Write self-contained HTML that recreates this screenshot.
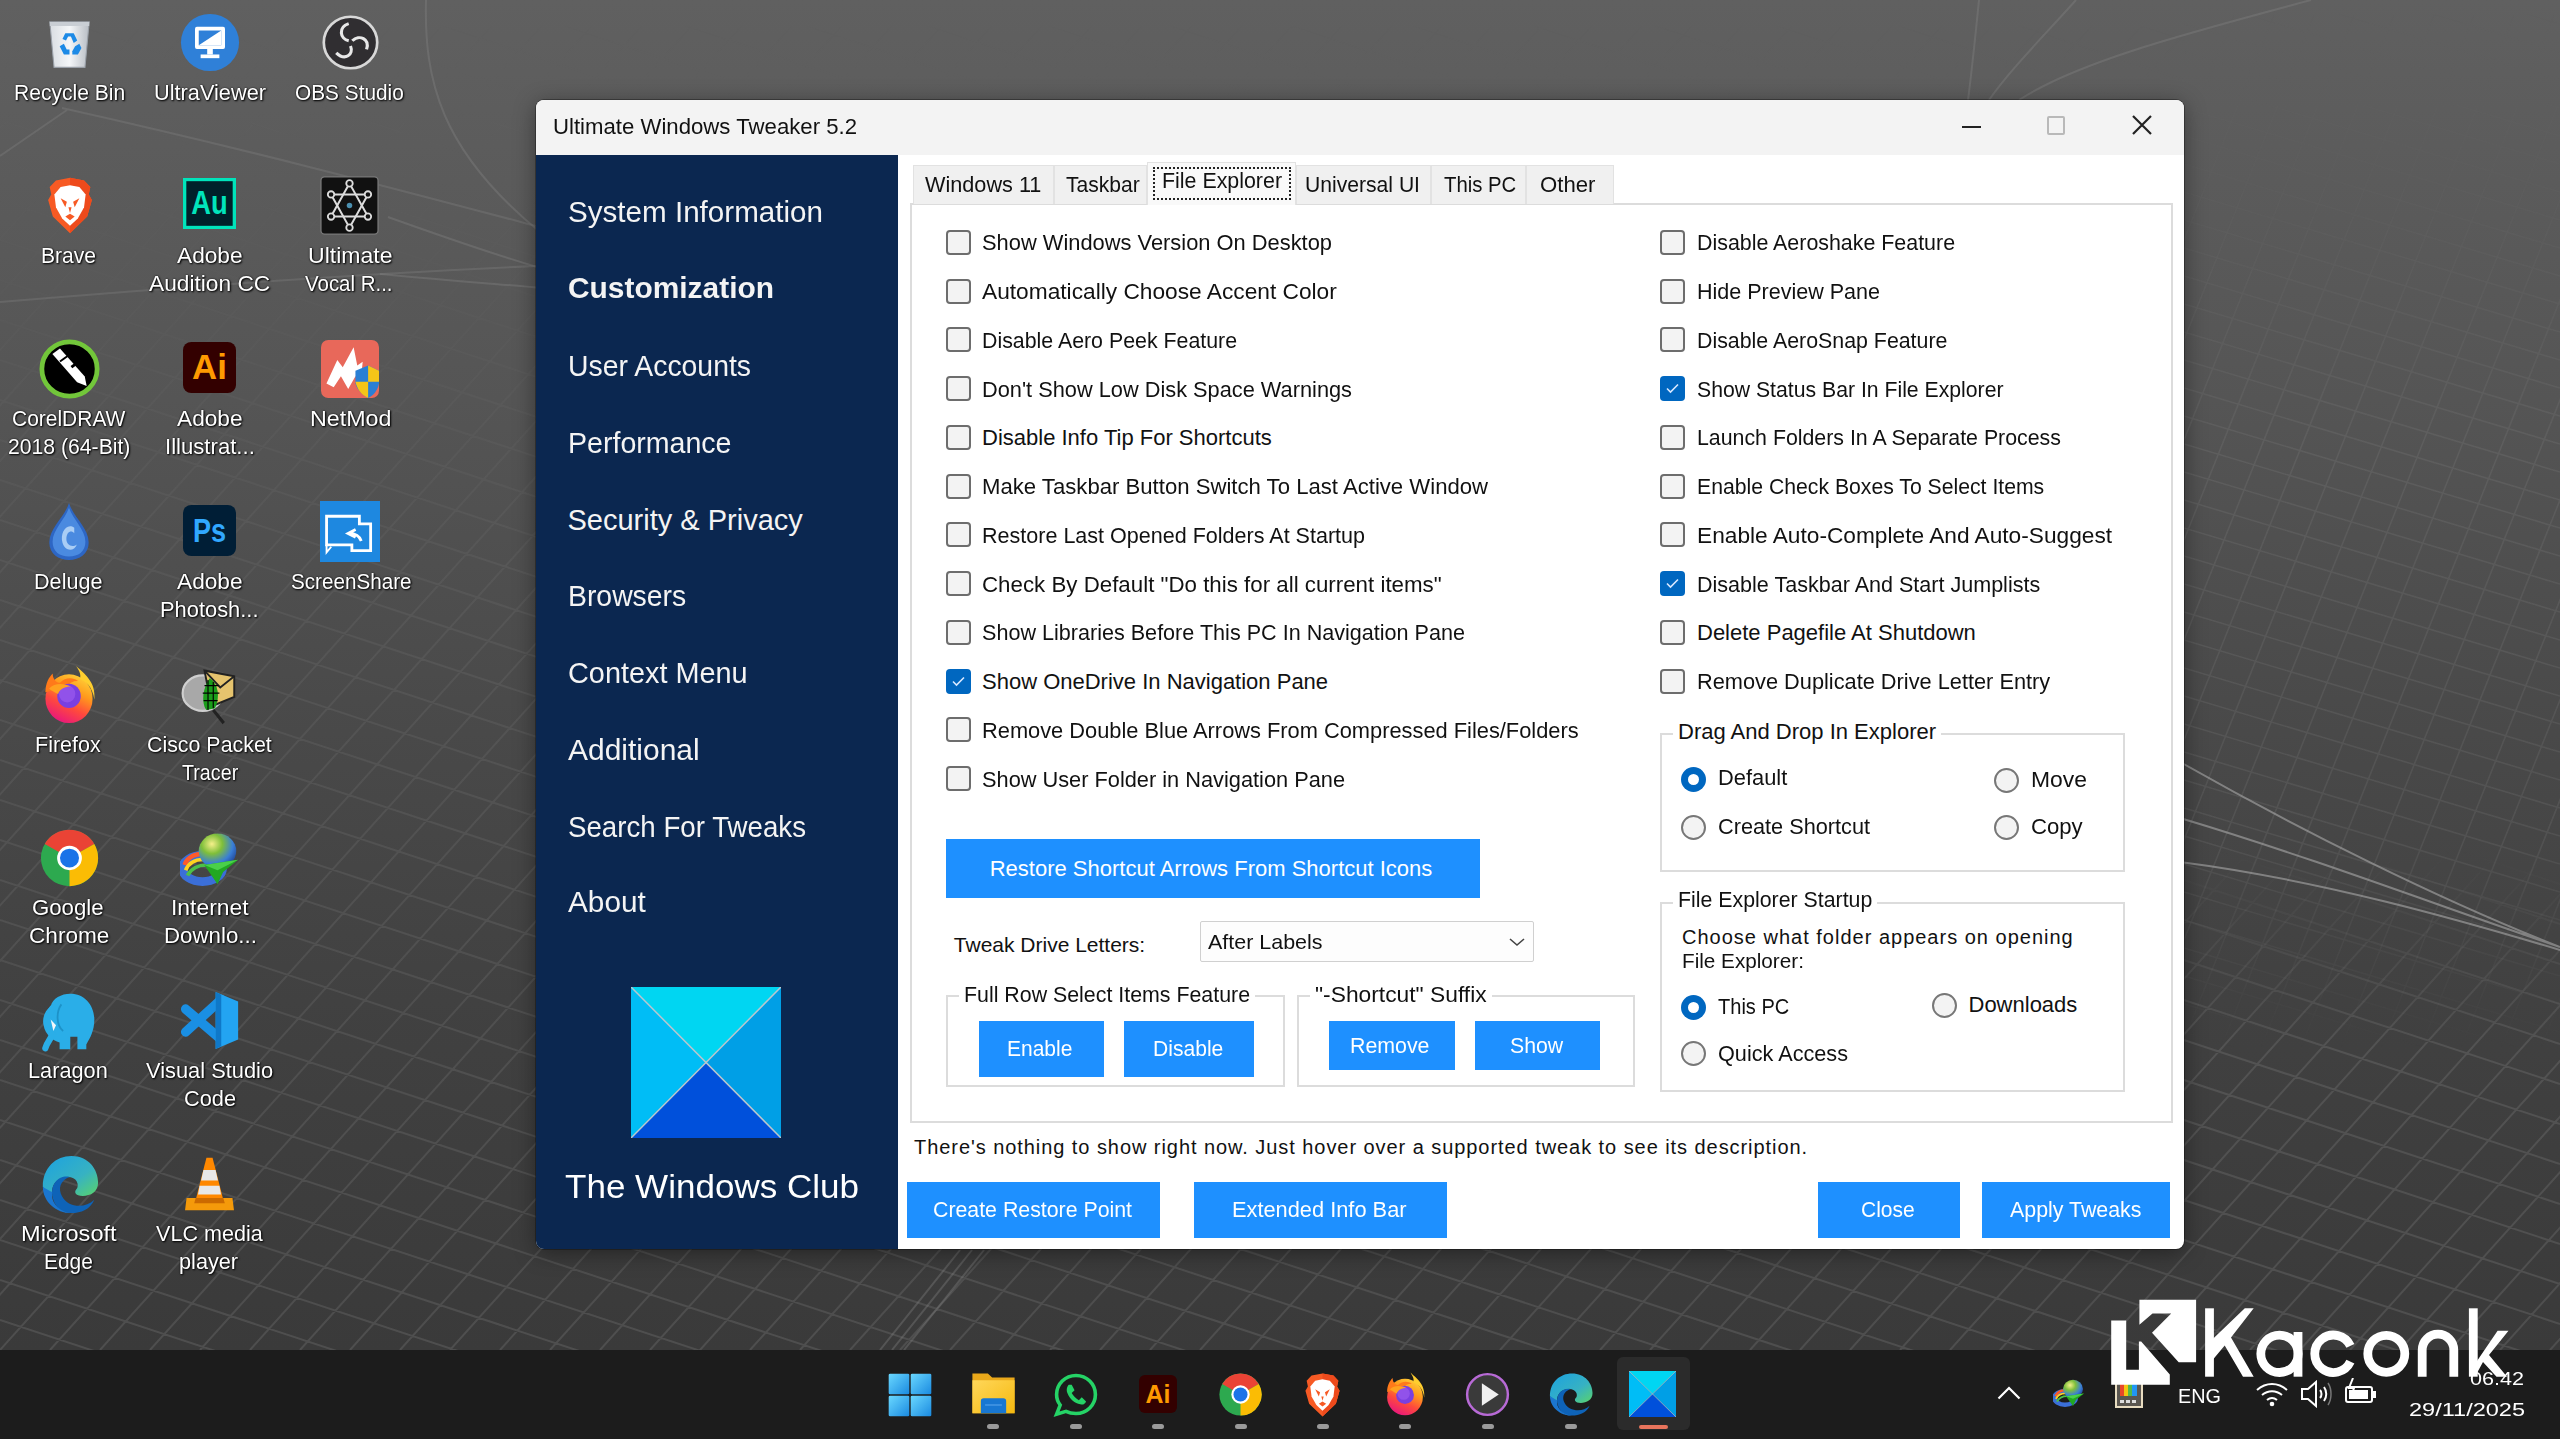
<!DOCTYPE html><html><head><meta charset="utf-8"><style>
html,body{margin:0;padding:0;}
body{width:2560px;height:1439px;overflow:hidden;position:relative;font-family:"Liberation Sans",sans-serif;
background:linear-gradient(180deg,#606060 0px,#555 400px,#4a4a4a 700px,#414141 1000px,#3a3a3a 1350px);}
.t{position:absolute;white-space:nowrap;line-height:1;}
.dl{color:#fff;text-shadow:1px 1px 2px #000,0 0 2px rgba(0,0,0,.8);}
.btn{position:absolute;background:#1e90ff;}
.cb{position:absolute;width:21px;height:21px;border:2px solid #6d6d6d;border-radius:4px;background:#f3f3f3;}
.cbc{position:absolute;width:25px;height:25px;border-radius:4px;background:#0067c0;}
.rd{position:absolute;width:21px;height:21px;border:2px solid #777;border-radius:50%;background:#f3f3f3;box-sizing:content-box;}
.rdc{position:absolute;width:25px;height:25px;border-radius:50%;background:#0067c0;}
.rdc:after{content:"";position:absolute;left:7px;top:7px;width:11px;height:11px;border-radius:50%;background:#fff;}
.gb{position:absolute;border:2px solid #dcdcdc;box-sizing:border-box;}
</style></head><body>
<svg style="position:absolute;left:0;top:0" width="2560" height="1350" viewBox="0 0 2560 1350">
<defs><linearGradient id="gm" x1="0" y1="0" x2="0" y2="1"><stop offset="0" stop-color="#fff" stop-opacity="0"/><stop offset="0.2" stop-color="#fff" stop-opacity="0.1"/><stop offset="0.45" stop-color="#fff" stop-opacity="0.55"/><stop offset="1" stop-color="#fff" stop-opacity="1"/></linearGradient><linearGradient id="gm3" x1="0" y1="0" x2="0" y2="1"><stop offset="0" stop-color="#fff" stop-opacity="0"/><stop offset="1" stop-color="#fff" stop-opacity="1"/></linearGradient><mask id="gmask"><rect width="2184" height="1350" fill="url(#gm)"/><rect x="2184" y="850" width="376" height="200" fill="url(#gm3)"/><rect x="2184" y="1050" width="376" height="300" fill="#fff"/></mask></defs>
<g mask="url(#gmask)"><path d="M0 -1000 L2560 -155 M0 -960 L2560 -115 M0 -920 L2560 -75 M0 -880 L2560 -35 M0 -840 L2560 4 M0 -800 L2560 44 M0 -760 L2560 84 M0 -720 L2560 124 M0 -680 L2560 164 M0 -640 L2560 204 M0 -600 L2560 244 M0 -560 L2560 284 M0 -520 L2560 324 M0 -480 L2560 364 M0 -440 L2560 404 M0 -400 L2560 444 M0 -360 L2560 484 M0 -320 L2560 524 M0 -280 L2560 564 M0 -240 L2560 604 M0 -200 L2560 644 M0 -160 L2560 684 M0 -120 L2560 724 M0 -80 L2560 764 M0 -40 L2560 804 M0 0 L2560 844 M0 40 L2560 884 M0 80 L2560 924 M0 120 L2560 964 M0 160 L2560 1004 M0 200 L2560 1044 M0 240 L2560 1084 M0 280 L2560 1124 M0 320 L2560 1164 M0 360 L2560 1204 M0 400 L2560 1244 M0 440 L2560 1284 M0 480 L2560 1324 M0 520 L2560 1364 M0 560 L2560 1404 M0 600 L2560 1444 M0 640 L2560 1484 M0 680 L2560 1524 M0 720 L2560 1564 M0 760 L2560 1604 M0 800 L2560 1644 M0 840 L2560 1684 M0 880 L2560 1724 M0 920 L2560 1764 M0 960 L2560 1804 M0 1000 L2560 1844 M0 1040 L2560 1884 M0 1080 L2560 1924 M0 1120 L2560 1964 M0 1160 L2560 2004 M0 1200 L2560 2044 M0 1240 L2560 2084 M0 1280 L2560 2124 M0 1320 L2560 2164 M0 1360 L2560 2204 M-1300 1350 L-85 0 M-1250 1350 L-35 0 M-1200 1350 L15 0 M-1150 1350 L65 0 M-1100 1350 L115 0 M-1050 1350 L165 0 M-1000 1350 L215 0 M-950 1350 L265 0 M-900 1350 L315 0 M-850 1350 L365 0 M-800 1350 L415 0 M-750 1350 L465 0 M-700 1350 L515 0 M-650 1350 L565 0 M-600 1350 L615 0 M-550 1350 L665 0 M-500 1350 L715 0 M-450 1350 L765 0 M-400 1350 L815 0 M-350 1350 L865 0 M-300 1350 L915 0 M-250 1350 L965 0 M-200 1350 L1015 0 M-150 1350 L1065 0 M-100 1350 L1115 0 M-50 1350 L1165 0 M0 1350 L1215 0 M50 1350 L1265 0 M100 1350 L1315 0 M150 1350 L1365 0 M200 1350 L1415 0 M250 1350 L1465 0 M300 1350 L1515 0 M350 1350 L1565 0 M400 1350 L1615 0 M450 1350 L1665 0 M500 1350 L1715 0 M550 1350 L1765 0 M600 1350 L1815 0 M650 1350 L1865 0 M700 1350 L1915 0 M750 1350 L1965 0 M800 1350 L2015 0 M850 1350 L2065 0 M900 1350 L2115 0 M950 1350 L2165 0 M1000 1350 L2215 0 M1050 1350 L2265 0 M1100 1350 L2315 0 M1150 1350 L2365 0 M1200 1350 L2415 0 M1250 1350 L2465 0 M1300 1350 L2515 0 M1350 1350 L2565 0 M1400 1350 L2615 0 M1450 1350 L2665 0 M1500 1350 L2715 0 M1550 1350 L2765 0 M1600 1350 L2815 0 M1650 1350 L2865 0 M1700 1350 L2915 0 M1750 1350 L2965 0 M1800 1350 L3015 0 M1850 1350 L3065 0 M1900 1350 L3115 0 M1950 1350 L3165 0 M2000 1350 L3215 0 M2050 1350 L3265 0 M2100 1350 L3315 0 M2150 1350 L3365 0 M2200 1350 L3415 0 M2250 1350 L3465 0 M2300 1350 L3515 0 M2350 1350 L3565 0 M2400 1350 L3615 0 M2450 1350 L3665 0 M2500 1350 L3715 0 M2550 1350 L3765 0 M2600 1350 L3815 0 M2650 1350 L3865 0" stroke="#a0a0a0" stroke-opacity="0.2" stroke-width="2" fill="none"/></g>
<defs><linearGradient id="gm2" x1="0" y1="0" x2="0" y2="1"><stop offset="0" stop-color="#fff" stop-opacity="0"/><stop offset="0.2" stop-color="#fff" stop-opacity="0.2"/><stop offset="0.42" stop-color="#fff" stop-opacity="0.9"/><stop offset="0.8" stop-color="#fff" stop-opacity="0.9"/><stop offset="1" stop-color="#fff" stop-opacity="0"/></linearGradient><mask id="gmask2"><rect x="2184" width="376" height="1050" fill="url(#gm2)"/></mask></defs>
<g mask="url(#gmask2)"><path d="M2184 -200 L2560 -87 M2184 -172 L2560 -59 M2184 -144 L2560 -31 M2184 -116 L2560 -3 M2184 -88 L2560 24 M2184 -60 L2560 52 M2184 -32 L2560 80 M2184 -4 L2560 108 M2184 24 L2560 136 M2184 52 L2560 164 M2184 80 L2560 192 M2184 108 L2560 220 M2184 136 L2560 248 M2184 164 L2560 276 M2184 192 L2560 304 M2184 220 L2560 332 M2184 248 L2560 360 M2184 276 L2560 388 M2184 304 L2560 416 M2184 332 L2560 444 M2184 360 L2560 472 M2184 388 L2560 500 M2184 416 L2560 528 M2184 444 L2560 556 M2184 472 L2560 584 M2184 500 L2560 612 M2184 528 L2560 640 M2184 556 L2560 668 M2184 584 L2560 696 M2184 612 L2560 724 M2184 640 L2560 752 M2184 668 L2560 780 M2184 696 L2560 808 M2184 724 L2560 836 M2184 752 L2560 864 M2184 780 L2560 892 M2184 808 L2560 920 M2184 836 L2560 948 M2184 864 L2560 976 M2184 892 L2560 1004 M2184 920 L2560 1032 M2184 948 L2560 1060 M2184 976 L2560 1088 M2184 1004 L2560 1116 M2184 1032 L2560 1144 M2184 1060 L2560 1172 M2184 1088 L2560 1200 M2184 1116 L2560 1228 M2184 1144 L2560 1256 M2184 1172 L2560 1284 M2184 1200 L2560 1312 M2184 1228 L2560 1340 M2184 1256 L2560 1368 M2184 1284 L2560 1396 M2184 1312 L2560 1424 M2184 1340 L2560 1452 M2184 1368 L2560 1480 M2184 1396 L2560 1508 M1700 1350 L2240 0 M1740 1350 L2280 0 M1780 1350 L2320 0 M1820 1350 L2360 0 M1860 1350 L2400 0 M1900 1350 L2440 0 M1940 1350 L2480 0 M1980 1350 L2520 0 M2020 1350 L2560 0 M2060 1350 L2600 0 M2100 1350 L2640 0 M2140 1350 L2680 0 M2180 1350 L2720 0 M2220 1350 L2760 0 M2260 1350 L2800 0 M2300 1350 L2840 0 M2340 1350 L2880 0 M2380 1350 L2920 0 M2420 1350 L2960 0 M2460 1350 L3000 0 M2500 1350 L3040 0 M2540 1350 L3080 0 M2580 1350 L3120 0 M2620 1350 L3160 0 M2660 1350 L3200 0" stroke="#9a9a9a" stroke-opacity="0.16" stroke-width="1.6" fill="none"/></g>
<g stroke="#888" stroke-opacity="0.35" stroke-width="2" fill="none">
<path d="M426 0 C 424 80, 440 150, 540 232"/>
<path d="M388 217 C 430 232, 480 250, 540 268"/>
<path d="M0 156 L67 110 M62 108 C 250 150, 400 190, 536 226 M0 302 C 200 285, 400 272, 536 266" stroke-opacity="0.3"/>
<path d="M380 274 C 440 280, 500 284, 540 288"/>
<path d="M880 1350 L 960 1250 M 892 1350 L 972 1250 M 904 1350 L 984 1250"/>
<path d="M2180 762 C 2300 830, 2440 900, 2560 947 M2180 818 C 2320 860, 2450 910, 2560 947 M2180 862 C 2320 880, 2460 920, 2560 950" stroke="#aaa" stroke-opacity="0.6"/>
<path d="M1979 0 C 1975 40, 1972 70, 1968 100 M2076 0 C 2040 40, 2010 70, 1989 100 M2311 0 C 2200 30, 2080 60, 2019 100"/>
</g></svg>
<svg style="position:absolute;left:47.0px;top:17.0px" width="45.0" height="52.0" viewBox="0 0 64 64" preserveAspectRatio="none"><defs><linearGradient id="rb_1" x1="0" x2="1"><stop offset="0" stop-color="#d9dde2"/><stop offset=".5" stop-color="#f4f6f8"/><stop offset="1" stop-color="#b8bdc4"/></linearGradient></defs>
<path d="M4 6 L60 6 L54 62 L10 62 Z" fill="url(#rb_1)" stroke="#9aa0a8" stroke-width="1.5"/>
<path d="M4 6 L60 6 L60 11 L4 11Z" fill="#c9ced4"/>
<g fill="#1d8ae6"><path d="M26 20 L38 20 L43 29 L38 32 L34 24 L30 24 L27 29 L22 27Z"/><path d="M18 36 L24 33 L28 40 L32 40 L32 46 L24 46Z"/><path d="M46 33 L40 36 L36 42 L36 46 L44 46 L49 38Z"/></g></svg>
<div class="t dl" style="left:13.8px;top:82.4px;font-size:22px;color:#fff;transform:scaleX(0.9578);transform-origin:0 0;">Recycle Bin</div>
<svg style="position:absolute;left:180.0px;top:13.0px" width="60.0" height="59.0" viewBox="0 0 64 64" preserveAspectRatio="none"><circle cx="32" cy="32" r="31" fill="#2f80d8"/>
<rect x="16" y="15" width="32" height="24" rx="2" fill="#fff"/><rect x="20" y="19" width="24" height="16" fill="#2f80d8"/><path d="M20 35 L44 19 L44 35Z" fill="#fff"/>
<rect x="29" y="39" width="6" height="6" fill="#fff"/><rect x="22" y="45" width="20" height="4" fill="#fff"/></svg>
<div class="t dl" style="left:153.8px;top:82.4px;font-size:22px;color:#fff;transform:scaleX(0.9884);transform-origin:0 0;">UltraViewer</div>
<svg style="position:absolute;left:322.0px;top:15.0px" width="57.0" height="55.0" viewBox="0 0 64 64" preserveAspectRatio="none"><circle cx="32" cy="32" r="30" fill="#302e31" stroke="#d8d8d8" stroke-width="3"/>
<g fill="none" stroke="#e8e8e8" stroke-width="3.5"><path d="M30 10 C18 14 20 28 30 30"/><path d="M50 40 C54 28 42 22 34 30"/><path d="M16 44 C26 54 36 46 32 36"/></g></svg>
<div class="t dl" style="left:295.0px;top:82.4px;font-size:22px;color:#fff;transform:scaleX(0.9462);transform-origin:0 0;">OBS Studio</div>
<svg style="position:absolute;left:45.0px;top:176.0px" width="50.0" height="59.0" viewBox="0 0 64 64" preserveAspectRatio="none"><path d="M32 2 L50 5 L58 12 L56 20 L60 26 L54 44 L32 62 L10 44 L4 26 L8 20 L6 12 L14 5 Z" fill="#f75a24"/>
<path d="M32 2 L50 5 L58 12 L56 20 L60 26 L54 44 L32 62 Z" fill="#ee4a1c"/>
<path d="M20 12 L32 10 L44 12 L52 20 L50 34 L42 46 L32 54 L22 46 L14 34 L12 20 Z" fill="#fff"/>
<path d="M20 24 L28 28 L26 34Z M44 24 L36 28 L38 34Z M26 44 L32 48 L38 44 L32 41Z M30 34 L32 40 L34 34Z" fill="#f75a24"/></svg>
<div class="t dl" style="left:41.2px;top:245.4px;font-size:22px;color:#fff;transform:scaleX(0.9570);transform-origin:0 0;">Brave</div>
<svg style="position:absolute;left:183.0px;top:178.0px" width="53.0" height="51.0" viewBox="0 0 64 64" preserveAspectRatio="none"><rect x="0" y="0" width="64" height="64" fill="#00e4bb"/><rect x="4" y="4" width="56" height="56" fill="#00212a"/>
<text x="32" y="45" font-family="Liberation Sans" font-weight="bold" font-size="42" fill="#00e4bb" text-anchor="middle" textLength="44" lengthAdjust="spacingAndGlyphs">Au</text></svg>
<div class="t dl" style="left:176.5px;top:245.4px;font-size:22px;color:#fff;transform:scaleX(1.0313);transform-origin:0 0;">Adobe</div>
<div class="t dl" style="left:148.8px;top:273.4px;font-size:22px;color:#fff;transform:scaleX(1.0329);transform-origin:0 0;">Audition CC</div>
<svg style="position:absolute;left:320.0px;top:176.0px" width="59.0" height="59.0" viewBox="0 0 64 64" preserveAspectRatio="none"><rect x="1" y="1" width="62" height="62" rx="4" fill="#111" stroke="#777" stroke-width="1.5"/>
<g stroke="#ddd" stroke-width="2.2" fill="none"><path d="M32 8 L52 44 L12 44 Z"/><path d="M32 56 L12 20 L52 20 Z"/></g>
<g fill="#111" stroke="#ddd" stroke-width="2"><circle cx="32" cy="8" r="3.5"/><circle cx="52" cy="44" r="3.5"/><circle cx="12" cy="44" r="3.5"/><circle cx="32" cy="56" r="3.5"/><circle cx="12" cy="20" r="3.5"/><circle cx="52" cy="20" r="3.5"/></g><circle cx="32" cy="32" r="3" fill="#4a8fb0"/></svg>
<div class="t dl" style="left:307.5px;top:245.4px;font-size:22px;color:#fff;transform:scaleX(1.0473);transform-origin:0 0;">Ultimate</div>
<div class="t dl" style="left:305.0px;top:273.4px;font-size:22px;color:#fff;transform:scaleX(0.9295);transform-origin:0 0;">Vocal R...</div>
<svg style="position:absolute;left:39.0px;top:339.0px" width="61.0" height="60.0" viewBox="0 0 64 64" preserveAspectRatio="none"><circle cx="32" cy="32" r="29" fill="#000" stroke="#72c63a" stroke-width="5"/>
<path d="M14 16 L22 10 L48 40 L50 50 L40 46 Z" fill="#fff"/><path d="M22 24 L30 18" stroke="#000" stroke-width="2"/><path d="M34 30 L38 27" stroke="#000" stroke-width="3"/></svg>
<div class="t dl" style="left:11.8px;top:408.4px;font-size:22px;color:#fff;transform:scaleX(0.9531);transform-origin:0 0;">CorelDRAW</div>
<div class="t dl" style="left:8.3px;top:436.4px;font-size:22px;color:#fff;transform:scaleX(0.9625);transform-origin:0 0;">2018 (64-Bit)</div>
<svg style="position:absolute;left:183.0px;top:342.0px" width="53.0" height="51.0" viewBox="0 0 64 64" preserveAspectRatio="none"><rect x="0" y="0" width="64" height="64" rx="10" fill="#330000"/>
<text x="32" y="46.4" font-family="Liberation Sans" font-weight="bold" font-size="43" fill="#ff9a00" text-anchor="middle" textLength="42" lengthAdjust="spacingAndGlyphs">Ai</text></svg>
<div class="t dl" style="left:176.5px;top:408.4px;font-size:22px;color:#fff;transform:scaleX(1.0313);transform-origin:0 0;">Adobe</div>
<div class="t dl" style="left:165.4px;top:436.4px;font-size:22px;color:#fff;transform:scaleX(1.0063);transform-origin:0 0;">Illustrat...</div>
<svg style="position:absolute;left:321.0px;top:340.0px" width="58.0" height="58.0" viewBox="0 0 64 64" preserveAspectRatio="none"><rect x="0" y="0" width="64" height="64" rx="8" fill="#e8685a"/>
<path d="M6 48 L18 22 L24 30 L36 8 L40 28 L46 24 L44 44 L38 40 L30 54 L22 40 L14 52Z" fill="#fff"/>
<path d="M38 34 L52 28 L64 34 L64 48 C62 58 56 62 52 64 C46 60 40 56 38 48Z" fill="#2a7fd4"/><path d="M52 28 L64 34 L64 46 L52 46Z M38 46 L52 46 L52 64 C44 60 40 54 38 46Z" fill="#f5c518"/></svg>
<div class="t dl" style="left:309.5px;top:408.4px;font-size:22px;color:#fff;transform:scaleX(1.0580);transform-origin:0 0;">NetMod</div>
<svg style="position:absolute;left:48.0px;top:502.0px" width="42.0" height="59.0" viewBox="0 0 64 64" preserveAspectRatio="none"><path d="M32 1 C38 16 62 28 62 44 C62 56 48 63 32 63 C16 63 2 56 2 44 C2 28 26 16 32 1Z" fill="#2d66c4"/>
<path d="M32 6 C37 18 57 30 57 43 C57 54 46 59 32 59 C18 59 7 54 7 43 C7 30 27 18 32 6Z" fill="#4a8ae0"/>
<path d="M40 28 C28 22 18 34 22 44 C26 54 40 54 44 46 C36 50 28 46 28 40 C28 32 36 30 40 34Z" fill="#a9cdf5"/></svg>
<div class="t dl" style="left:34.3px;top:571.4px;font-size:22px;color:#fff;transform:scaleX(0.9825);transform-origin:0 0;">Deluge</div>
<svg style="position:absolute;left:183.0px;top:505.0px" width="53.0" height="51.0" viewBox="0 0 64 64" preserveAspectRatio="none"><rect x="0" y="0" width="64" height="64" rx="10" fill="#001e36"/>
<text x="32" y="46.3" font-family="Liberation Sans" font-weight="bold" font-size="41" fill="#31a8ff" text-anchor="middle" textLength="40" lengthAdjust="spacingAndGlyphs">Ps</text></svg>
<div class="t dl" style="left:176.5px;top:571.4px;font-size:22px;color:#fff;transform:scaleX(1.0313);transform-origin:0 0;">Adobe</div>
<div class="t dl" style="left:160.2px;top:599.4px;font-size:22px;color:#fff;transform:scaleX(0.9945);transform-origin:0 0;">Photosh...</div>
<svg style="position:absolute;left:320.0px;top:501.0px" width="60.0" height="61.0" viewBox="0 0 64 64" preserveAspectRatio="none"><rect x="0" y="0" width="64" height="64" fill="#1e88e0"/>
<path d="M7 16 L42 16 L42 24 L54 24 L54 52 L34 52 L34 46 L7 46 Z" fill="none" stroke="#fff" stroke-width="3"/><path d="M7 46 L7 54 L12 48" fill="none" stroke="#fff" stroke-width="2"/>
<path d="M38 30 L30 34 L38 38 M31 34 C38 34 42 36 44 42" stroke="#fff" stroke-width="3" fill="none"/></svg>
<div class="t dl" style="left:290.6px;top:571.4px;font-size:22px;color:#fff;transform:scaleX(0.9392);transform-origin:0 0;">ScreenShare</div>
<svg style="position:absolute;left:40.0px;top:664.0px" width="58.0" height="60.0" viewBox="0 0 64 64" preserveAspectRatio="none"><defs><linearGradient id="ffa_13" x1="0.8" y1="0" x2="0.3" y2="1"><stop offset="0" stop-color="#ffd43a"/><stop offset=".35" stop-color="#ff9a1c"/><stop offset=".65" stop-color="#ff4a3c"/><stop offset="1" stop-color="#e8157f"/></linearGradient></defs>
<circle cx="32" cy="37" r="26" fill="url(#ffa_13)"/>
<path d="M40 2 C48 10 62 18 60 38 C58 24 50 18 44 16 C46 10 42 6 40 2Z" fill="#ffce2e"/>
<path d="M6 30 C6 20 10 14 14 10 C14 16 18 20 22 20 C28 14 36 14 42 18 C36 18 32 20 30 24 Z" fill="#ff7a1a"/>
<circle cx="32" cy="34" r="13" fill="#7a3fe0"/><circle cx="30" cy="32" r="9" fill="#9152ea"/>
<path d="M10 26 C16 20 26 20 34 24 C28 24 22 26 20 32 C16 30 12 28 10 26Z" fill="#ffa21f"/></svg>
<div class="t dl" style="left:35.4px;top:734.4px;font-size:22px;color:#fff;transform:scaleX(0.9772);transform-origin:0 0;">Firefox</div>
<svg style="position:absolute;left:180.0px;top:665.0px" width="56.0" height="60.0" viewBox="0 0 64 64" preserveAspectRatio="none"><ellipse cx="26" cy="30" rx="23" ry="19" fill="#a8a8a8" stroke="#cfcfcf" stroke-width="2.5"/><path d="M38 48 L50 62" stroke="#222" stroke-width="3.5"/>
<path d="M28 6 L62 12 L62 34 L36 44Z" fill="#e6c46e" stroke="#222" stroke-width="2.2"/><path d="M28 6 L46 24 L62 12" fill="none" stroke="#222" stroke-width="2.2"/>
<path d="M34 14 C44 20 46 34 40 46 L30 48 C24 40 26 24 34 14Z" fill="#1a9c1a"/><g stroke="#000" stroke-width="1.3"><path d="M28 22 L44 22 M26 30 L45 30 M27 38 L43 38 M32 16 L32 48 M38 18 L38 46"/></g></svg>
<div class="t dl" style="left:147.0px;top:734.4px;font-size:22px;color:#fff;transform:scaleX(0.9714);transform-origin:0 0;">Cisco Packet</div>
<div class="t dl" style="left:182.0px;top:762.4px;font-size:22px;color:#fff;transform:scaleX(0.8956);transform-origin:0 0;">Tracer</div>
<svg style="position:absolute;left:39.0px;top:828.0px" width="61.0" height="60.0" viewBox="0 0 64 64" preserveAspectRatio="none"><circle cx="32" cy="32" r="30" fill="#2da94f"/>
<path d="M32 32 L6 17 A30 30 0 0 1 58 17 Z" fill="#ea4335"/>
<path d="M32 32 L58 17 A30 30 0 0 1 32 62 Z" fill="#fbbc04"/>
<circle cx="32" cy="32" r="13" fill="#fff"/><circle cx="32" cy="32" r="10" fill="#1a73e8"/></svg>
<div class="t dl" style="left:31.9px;top:897.4px;font-size:22px;color:#fff;transform:scaleX(1.0093);transform-origin:0 0;">Google</div>
<div class="t dl" style="left:28.8px;top:925.4px;font-size:22px;color:#fff;transform:scaleX(1.0275);transform-origin:0 0;">Chrome</div>
<svg style="position:absolute;left:180.0px;top:830.0px" width="60.0" height="56.0" viewBox="0 0 64 64" preserveAspectRatio="none"><defs><radialGradient id="idg_16" cx=".35" cy=".3" r=".8"><stop offset="0" stop-color="#f5f08a"/><stop offset=".35" stop-color="#7fbf3a"/><stop offset=".7" stop-color="#3a7ed6"/><stop offset="1" stop-color="#1c3c8a"/></radialGradient></defs>
<ellipse cx="24" cy="44" rx="21" ry="15" fill="none" stroke="#3b6fd8" stroke-width="10"/>
<path d="M5 40 C8 30 18 26 28 28" stroke="#ff5a2a" stroke-width="5" fill="none"/><path d="M6 46 C10 36 18 33 28 34" stroke="#ffd21f" stroke-width="4" fill="none"/><path d="M8 52 C12 44 20 40 28 40" stroke="#4cc04a" stroke-width="4" fill="none"/>
<circle cx="40" cy="24" r="20" fill="url(#idg_16)"/>
<path d="M26 40 L62 34 L46 48 L40 62 Z" fill="#22a822"/><path d="M26 40 L62 34 L40 46Z" fill="#4ad04a"/></svg>
<div class="t dl" style="left:170.6px;top:897.4px;font-size:22px;color:#fff;transform:scaleX(1.0390);transform-origin:0 0;">Internet</div>
<div class="t dl" style="left:164.2px;top:925.4px;font-size:22px;color:#fff;transform:scaleX(1.0131);transform-origin:0 0;">Downlo...</div>
<svg style="position:absolute;left:40.0px;top:991.0px" width="57.0" height="61.0" viewBox="0 0 64 64" preserveAspectRatio="none"><path d="M34 3 C50 3 61 15 61 30 C61 42 56 50 52 56 L52 61 L42 61 L42 48 L34 48 L34 61 L22 61 L22 54 C14 52 6 46 4 36 C2 28 6 20 12 16 C14 8 24 3 34 3Z" fill="#2aaee8"/>
<path d="M14 18 C8 26 8 38 14 46 C12 50 8 54 6 60" stroke="#2aaee8" stroke-width="7" fill="none" stroke-linecap="round"/>
<path d="M24 14 C18 22 18 36 26 42" stroke="#1d92c8" stroke-width="2" fill="none"/><path d="M12 30 L18 36 L15 42Z" fill="#f4f8fa"/></svg>
<div class="t dl" style="left:28.3px;top:1060.4px;font-size:22px;color:#fff;transform:scaleX(0.9872);transform-origin:0 0;">Laragon</div>
<svg style="position:absolute;left:180.0px;top:990.0px" width="60.0" height="61.0" viewBox="0 0 64 64" preserveAspectRatio="none"><g stroke="#1a8fe3" stroke-width="10" stroke-linecap="round"><path d="M6 20 L44 52"/><path d="M6 44 L44 10"/></g>
<polygon points="38,2 62,12 62,52 38,62" fill="#23a4f2"/><polygon points="38,2 44,5 44,59 38,62" fill="#0f78c8"/></svg>
<div class="t dl" style="left:146.0px;top:1060.4px;font-size:22px;color:#fff;transform:scaleX(0.9928);transform-origin:0 0;">Visual Studio</div>
<div class="t dl" style="left:183.9px;top:1088.4px;font-size:22px;color:#fff;transform:scaleX(0.9906);transform-origin:0 0;">Code</div>
<svg style="position:absolute;left:39.0px;top:1154.0px" width="61.0" height="61.0" viewBox="0 0 64 64" preserveAspectRatio="none"><defs><linearGradient id="eg2_19" x1="0" y1="0" x2="1" y2="1"><stop offset="0" stop-color="#1ba1e2"/><stop offset=".6" stop-color="#37b2c2"/><stop offset="1" stop-color="#5ad46a"/></linearGradient></defs>
<path d="M4 34 C4 14 18 2 34 2 C52 2 62 16 62 30 C62 40 54 44 46 44 C38 44 36 40 40 36 C42 32 40 24 30 24 C18 24 12 34 14 44 C10 40 4 36 4 34Z" fill="url(#eg2_19)"/>
<path d="M14 44 C12 30 22 22 32 24 C22 28 20 36 24 44 C30 56 48 58 58 48 C54 58 44 62 34 62 C22 62 16 54 14 44Z" fill="#0e63b8"/>
<path d="M4 34 C4 50 18 62 34 62 C20 60 12 50 14 40 C10 38 6 36 4 34Z" fill="#1b76d0"/></svg>
<div class="t dl" style="left:20.6px;top:1223.4px;font-size:22px;color:#fff;transform:scaleX(1.0713);transform-origin:0 0;">Microsoft</div>
<div class="t dl" style="left:43.7px;top:1251.4px;font-size:22px;color:#fff;transform:scaleX(0.9518);transform-origin:0 0;">Edge</div>
<svg style="position:absolute;left:185.0px;top:1156.0px" width="49.0" height="56.0" viewBox="0 0 64 64" preserveAspectRatio="none"><path d="M28 2 L36 2 L50 50 L14 50 Z" fill="#ff8800"/><path d="M24 16 L40 16 L43 28 L21 28Z" fill="#e8e8e8"/><path d="M19 34 L45 34 L47 44 L17 44Z" fill="#e8e8e8"/>
<path d="M2 48 L62 48 L64 62 L0 62Z" fill="#f59a0a"/><path d="M14 48 L50 48 L52 54 L12 54Z" fill="#cc6a00"/></svg>
<div class="t dl" style="left:155.6px;top:1223.4px;font-size:22px;color:#fff;transform:scaleX(0.9804);transform-origin:0 0;">VLC media</div>
<div class="t dl" style="left:178.7px;top:1251.4px;font-size:22px;color:#fff;transform:scaleX(0.9863);transform-origin:0 0;">player</div>
<div style="position:absolute;left:536.0px;top:100.0px;width:1648.0px;height:1149.0px;background:#fff;border-radius:8px;overflow:hidden;box-shadow:0 0 0 1px rgba(0,0,0,.3),0 4px 22px rgba(0,0,0,.4);"></div>
<div style="position:absolute;left:536.0px;top:100.0px;width:1648.0px;height:55.0px;background:#f3f3f3;border-radius:8px 8px 0 0;"></div>
<div style="position:absolute;left:536.0px;top:155.0px;width:362.0px;height:1094.0px;background:#0b2750;border-radius:0 0 0 8px;"></div>
<div class="t " style="left:553.0px;top:115.9px;font-size:22px;color:#111;transform:scaleX(1.0080);transform-origin:0 0;">Ultimate Windows Tweaker 5.2</div>
<div style="position:absolute;left:1962.0px;top:126.0px;width:19.0px;height:2.0px;background:#222;"></div>
<div style="position:absolute;left:2047.0px;top:116.0px;width:18.0px;height:19.0px;border:2px solid #b9b9b9;box-sizing:border-box;border-radius:2px;"></div>
<svg style="position:absolute;left:2130px;top:114px" width="24" height="24" viewBox="0 0 24 24"><path d="M3 2 L21 20 M21 2 L3 20" stroke="#222" stroke-width="2.2"/></svg>
<div class="t " style="left:567.5px;top:198.0px;font-size:29px;color:#f4f4f4;transform:scaleX(1.0208);transform-origin:0 0;">System Information</div>
<div class="t " style="left:567.5px;top:274.2px;font-size:29px;color:#f4f4f4;font-weight:bold;transform:scaleX(1.0311);transform-origin:0 0;">Customization</div>
<div class="t " style="left:567.5px;top:351.7px;font-size:29px;color:#f4f4f4;transform:scaleX(0.9788);transform-origin:0 0;">User Accounts</div>
<div class="t " style="left:567.5px;top:428.9px;font-size:29px;color:#f4f4f4;transform:scaleX(0.9849);transform-origin:0 0;">Performance</div>
<div class="t " style="left:567.5px;top:506.0px;font-size:29px;color:#f4f4f4;">Security &amp; Privacy</div>
<div class="t " style="left:567.5px;top:581.7px;font-size:29px;color:#f4f4f4;transform:scaleX(0.9781);transform-origin:0 0;">Browsers</div>
<div class="t " style="left:567.5px;top:659.0px;font-size:29px;color:#f4f4f4;transform:scaleX(0.9948);transform-origin:0 0;">Context Menu</div>
<div class="t " style="left:567.5px;top:735.5px;font-size:29px;color:#f4f4f4;transform:scaleX(1.0334);transform-origin:0 0;">Additional</div>
<div class="t " style="left:567.5px;top:812.5px;font-size:29px;color:#f4f4f4;transform:scaleX(0.9547);transform-origin:0 0;">Search For Tweaks</div>
<div class="t " style="left:567.5px;top:888.3px;font-size:29px;color:#f4f4f4;transform:scaleX(1.0266);transform-origin:0 0;">About</div>
<svg style="position:absolute;left:631px;top:987px" width="150" height="151" viewBox="0 0 150 151">
<polygon points="0,0 150,0 75,75.5" fill="#00d6f2"/>
<polygon points="0,0 75,75.5 0,151" fill="#00bdf6"/>
<polygon points="150,0 150,151 75,75.5" fill="#009fe6"/>
<polygon points="0,151 150,151 75,75.5" fill="#0050db"/>
<path d="M0 0 L150 151 M150 0 L0 151" stroke="#b9c7cf" stroke-width="1.5"/>
</svg>
<div class="t " style="left:565.0px;top:1168.7px;font-size:34px;color:#fff;transform:scaleX(1.0305);transform-origin:0 0;">The Windows Club</div>
<div style="position:absolute;left:910.0px;top:203.0px;width:1263.0px;height:920.0px;border:2px solid #dcdcdc;box-sizing:border-box;background:#fff;"></div>
<div style="position:absolute;left:913.0px;top:165.0px;width:141.0px;height:39.0px;background:#f0f0f0;border:1px solid #e2e2e2;border-bottom:none;box-sizing:border-box;"></div>
<div class="t " style="left:924.6px;top:173.6px;font-size:22px;color:#111;transform:scaleX(0.9847);transform-origin:0 0;">Windows 11</div>
<div style="position:absolute;left:1054.0px;top:165.0px;width:93.0px;height:39.0px;background:#f0f0f0;border:1px solid #e2e2e2;border-bottom:none;box-sizing:border-box;"></div>
<div class="t " style="left:1066.0px;top:173.6px;font-size:22px;color:#111;transform:scaleX(0.9581);transform-origin:0 0;">Taskbar</div>
<div style="position:absolute;left:1296.0px;top:165.0px;width:135.0px;height:39.0px;background:#f0f0f0;border:1px solid #e2e2e2;border-bottom:none;box-sizing:border-box;"></div>
<div class="t " style="left:1305.0px;top:173.6px;font-size:22px;color:#111;transform:scaleX(0.9598);transform-origin:0 0;">Universal UI</div>
<div style="position:absolute;left:1431.0px;top:165.0px;width:95.0px;height:39.0px;background:#f0f0f0;border:1px solid #e2e2e2;border-bottom:none;box-sizing:border-box;"></div>
<div class="t " style="left:1443.5px;top:173.6px;font-size:22px;color:#111;transform:scaleX(0.9241);transform-origin:0 0;">This PC</div>
<div style="position:absolute;left:1526.0px;top:165.0px;width:88.0px;height:39.0px;background:#f0f0f0;border:1px solid #e2e2e2;border-bottom:none;box-sizing:border-box;"></div>
<div class="t " style="left:1539.6px;top:173.6px;font-size:22px;color:#111;transform:scaleX(1.0070);transform-origin:0 0;">Other</div>
<div style="position:absolute;left:1147.0px;top:162.0px;width:149.0px;height:43.0px;background:#f9f9f9;border:1px solid #e2e2e2;border-bottom:none;box-sizing:border-box;"></div>
<div style="position:absolute;left:1153.0px;top:167.0px;width:138.0px;height:33.0px;border:2px dotted #222;box-sizing:border-box;"></div>
<div class="t " style="left:1162.0px;top:169.9px;font-size:22px;color:#111;transform:scaleX(0.9718);transform-origin:0 0;">File Explorer</div>
<div class="cb" style="left:946px;top:229.9px"></div>
<div class="t " style="left:982.0px;top:232.3px;font-size:22px;color:#111;transform:scaleX(0.9939);transform-origin:0 0;">Show Windows Version On Desktop</div>
<div class="cb" style="left:946px;top:278.6px"></div>
<div class="t " style="left:982.0px;top:281.0px;font-size:22px;color:#111;transform:scaleX(1.0326);transform-origin:0 0;">Automatically Choose Accent Color</div>
<div class="cb" style="left:946px;top:327.4px"></div>
<div class="t " style="left:982.0px;top:329.8px;font-size:22px;color:#111;transform:scaleX(0.9699);transform-origin:0 0;">Disable Aero Peek Feature</div>
<div class="cb" style="left:946px;top:376.1px"></div>
<div class="t " style="left:982.0px;top:378.5px;font-size:22px;color:#111;transform:scaleX(0.9896);transform-origin:0 0;">Don't Show Low Disk Space Warnings</div>
<div class="cb" style="left:946px;top:424.9px"></div>
<div class="t " style="left:982.0px;top:427.3px;font-size:22px;color:#111;">Disable Info Tip For Shortcuts</div>
<div class="cb" style="left:946px;top:473.6px"></div>
<div class="t " style="left:982.0px;top:476.0px;font-size:22px;color:#111;transform:scaleX(1.0061);transform-origin:0 0;">Make Taskbar Button Switch To Last Active Window</div>
<div class="cb" style="left:946px;top:522.4px"></div>
<div class="t " style="left:982.0px;top:524.8px;font-size:22px;color:#111;transform:scaleX(0.9788);transform-origin:0 0;">Restore Last Opened Folders At Startup</div>
<div class="cb" style="left:946px;top:571.1px"></div>
<div class="t " style="left:982.0px;top:573.5px;font-size:22px;color:#111;transform:scaleX(1.0139);transform-origin:0 0;">Check By Default "Do this for all current items"</div>
<div class="cb" style="left:946px;top:619.9px"></div>
<div class="t " style="left:982.0px;top:622.3px;font-size:22px;color:#111;transform:scaleX(0.9809);transform-origin:0 0;">Show Libraries Before This PC In Navigation Pane</div>
<div class="cbc" style="left:946px;top:668.6px"><svg width="25" height="25" viewBox="0 0 25 25" style="position:absolute;left:0;top:0"><path d="M7 12.5 L10.5 16 L18 8.5" stroke="#d8e8ff" stroke-width="1.6" fill="none"/></svg></div>
<div class="t " style="left:982.0px;top:671.0px;font-size:22px;color:#111;">Show OneDrive In Navigation Pane</div>
<div class="cb" style="left:946px;top:717.4px"></div>
<div class="t " style="left:982.0px;top:719.8px;font-size:22px;color:#111;transform:scaleX(0.9918);transform-origin:0 0;">Remove Double Blue Arrows From Compressed Files/Folders</div>
<div class="cb" style="left:946px;top:766.1px"></div>
<div class="t " style="left:982.0px;top:768.5px;font-size:22px;color:#111;transform:scaleX(0.9895);transform-origin:0 0;">Show User Folder in Navigation Pane</div>
<div class="cb" style="left:1660px;top:229.9px"></div>
<div class="t " style="left:1697.0px;top:232.3px;font-size:22px;color:#111;transform:scaleX(0.9723);transform-origin:0 0;">Disable Aeroshake Feature</div>
<div class="cb" style="left:1660px;top:278.6px"></div>
<div class="t " style="left:1697.0px;top:281.0px;font-size:22px;color:#111;transform:scaleX(0.9781);transform-origin:0 0;">Hide Preview Pane</div>
<div class="cb" style="left:1660px;top:327.4px"></div>
<div class="t " style="left:1697.0px;top:329.8px;font-size:22px;color:#111;transform:scaleX(0.9704);transform-origin:0 0;">Disable AeroSnap Feature</div>
<div class="cbc" style="left:1660px;top:376.1px"><svg width="25" height="25" viewBox="0 0 25 25" style="position:absolute;left:0;top:0"><path d="M7 12.5 L10.5 16 L18 8.5" stroke="#d8e8ff" stroke-width="1.6" fill="none"/></svg></div>
<div class="t " style="left:1697.0px;top:378.5px;font-size:22px;color:#111;transform:scaleX(0.9642);transform-origin:0 0;">Show Status Bar In File Explorer</div>
<div class="cb" style="left:1660px;top:424.9px"></div>
<div class="t " style="left:1697.0px;top:427.3px;font-size:22px;color:#111;transform:scaleX(0.9693);transform-origin:0 0;">Launch Folders In A Separate Process</div>
<div class="cb" style="left:1660px;top:473.6px"></div>
<div class="t " style="left:1697.0px;top:476.0px;font-size:22px;color:#111;transform:scaleX(0.9636);transform-origin:0 0;">Enable Check Boxes To Select Items</div>
<div class="cb" style="left:1660px;top:522.4px"></div>
<div class="t " style="left:1697.0px;top:524.8px;font-size:22px;color:#111;transform:scaleX(1.0315);transform-origin:0 0;">Enable Auto-Complete And Auto-Suggest</div>
<div class="cbc" style="left:1660px;top:571.1px"><svg width="25" height="25" viewBox="0 0 25 25" style="position:absolute;left:0;top:0"><path d="M7 12.5 L10.5 16 L18 8.5" stroke="#d8e8ff" stroke-width="1.6" fill="none"/></svg></div>
<div class="t " style="left:1697.0px;top:573.5px;font-size:22px;color:#111;transform:scaleX(0.9791);transform-origin:0 0;">Disable Taskbar And Start Jumplists</div>
<div class="cb" style="left:1660px;top:619.9px"></div>
<div class="t " style="left:1697.0px;top:622.3px;font-size:22px;color:#111;">Delete Pagefile At Shutdown</div>
<div class="cb" style="left:1660px;top:668.6px"></div>
<div class="t " style="left:1697.0px;top:671.0px;font-size:22px;color:#111;transform:scaleX(0.9893);transform-origin:0 0;">Remove Duplicate Drive Letter Entry</div>
<div style="position:absolute;left:946.0px;top:839.0px;width:534.0px;height:59.0px;background:#1e90ff;"></div>
<div class="t " style="left:989.7px;top:858.4px;font-size:22px;color:#fff;">Restore Shortcut Arrows From Shortcut Icons</div>
<div class="t " style="left:953.8px;top:934.2px;font-size:21px;color:#111;">Tweak Drive Letters:</div>
<div style="position:absolute;left:1200.0px;top:921.0px;width:334.0px;height:41.0px;background:#fdfdfd;border:1px solid #d0d0d0;box-sizing:border-box;border-radius:2px;"></div>
<div class="t " style="left:1207.8px;top:931.2px;font-size:21px;color:#111;transform:scaleX(1.0222);transform-origin:0 0;">After Labels</div>
<svg style="position:absolute;left:1508px;top:936px" width="18" height="12" viewBox="0 0 18 12"><path d="M2 3 L9 9 L16 3" stroke="#444" stroke-width="1.6" fill="none"/></svg>
<div class="gb" style="left:946px;top:995px;width:339px;height:92px"></div>
<div style="position:absolute;left:959.0px;top:993.0px;width:296.0px;height:5.0px;background:#fff;"></div>
<div class="t " style="left:964.0px;top:984.4px;font-size:22px;color:#111;transform:scaleX(0.9707);transform-origin:0 0;">Full Row Select Items Feature</div>
<div class="gb" style="left:1297px;top:995px;width:338px;height:92px"></div>
<div style="position:absolute;left:1310.0px;top:993.0px;width:181.6px;height:5.0px;background:#fff;"></div>
<div class="t " style="left:1315.0px;top:984.4px;font-size:22px;color:#111;transform:scaleX(1.0362);transform-origin:0 0;">"-Shortcut" Suffix</div>
<div style="position:absolute;left:979.0px;top:1021.0px;width:125.0px;height:56.0px;background:#1e90ff;"></div>
<div class="t " style="left:1007.0px;top:1038.4px;font-size:22px;color:#fff;transform:scaleX(0.9547);transform-origin:0 0;">Enable</div>
<div style="position:absolute;left:1124.0px;top:1021.0px;width:130.0px;height:56.0px;background:#1e90ff;"></div>
<div class="t " style="left:1153.4px;top:1038.4px;font-size:22px;color:#fff;transform:scaleX(0.9581);transform-origin:0 0;">Disable</div>
<div style="position:absolute;left:1329.0px;top:1021.0px;width:126.0px;height:49.0px;background:#1e90ff;"></div>
<div class="t " style="left:1350.4px;top:1035.0px;font-size:22px;color:#fff;transform:scaleX(0.9704);transform-origin:0 0;">Remove</div>
<div style="position:absolute;left:1475.0px;top:1021.0px;width:125.0px;height:49.0px;background:#1e90ff;"></div>
<div class="t " style="left:1509.7px;top:1035.0px;font-size:22px;color:#fff;transform:scaleX(0.9667);transform-origin:0 0;">Show</div>
<div class="gb" style="left:1660px;top:733px;width:465px;height:139px"></div>
<div style="position:absolute;left:1673.0px;top:731.0px;width:268.4px;height:5.0px;background:#fff;"></div>
<div class="t " style="left:1678.0px;top:721.4px;font-size:22px;color:#111;">Drag And Drop In Explorer</div>
<div class="gb" style="left:1660px;top:902px;width:465px;height:190px"></div>
<div style="position:absolute;left:1673.0px;top:900.0px;width:204.3px;height:5.0px;background:#fff;"></div>
<div class="t " style="left:1678.0px;top:889.4px;font-size:22px;color:#111;transform:scaleX(0.9690);transform-origin:0 0;">File Explorer Startup</div>
<div class="rdc" style="left:1680.5px;top:766.5px"></div>
<div class="t " style="left:1717.5px;top:766.9px;font-size:22px;color:#111;transform:scaleX(0.9942);transform-origin:0 0;">Default</div>
<div class="rd" style="left:1994.0px;top:767.5px"></div>
<div class="t " style="left:2031.0px;top:769.2px;font-size:22px;color:#111;transform:scaleX(1.0410);transform-origin:0 0;">Move</div>
<div class="rd" style="left:1680.5px;top:814.5px"></div>
<div class="t " style="left:1717.5px;top:815.9px;font-size:22px;color:#111;transform:scaleX(0.9866);transform-origin:0 0;">Create Shortcut</div>
<div class="rd" style="left:1994.0px;top:814.5px"></div>
<div class="t " style="left:2031.0px;top:815.9px;font-size:22px;color:#111;transform:scaleX(1.0066);transform-origin:0 0;">Copy</div>
<div class="rdc" style="left:1680.5px;top:994.5px"></div>
<div class="t " style="left:1717.5px;top:995.7px;font-size:22px;color:#111;transform:scaleX(0.9114);transform-origin:0 0;">This PC</div>
<div class="rd" style="left:1931.5px;top:992.5px"></div>
<div class="t " style="left:1968.5px;top:994.4px;font-size:22px;color:#111;">Downloads</div>
<div class="rd" style="left:1680.5px;top:1040.5px"></div>
<div class="t " style="left:1717.5px;top:1042.8px;font-size:22px;color:#111;transform:scaleX(0.9846);transform-origin:0 0;">Quick Access</div>
<div class="t " style="left:1682.0px;top:927.1px;font-size:20px;color:#111;letter-spacing:1px;">Choose what folder appears on opening</div>
<div class="t " style="left:1682.0px;top:951.1px;font-size:20px;color:#111;transform:scaleX(1.0347);transform-origin:0 0;">File Explorer:</div>
<div class="t " style="left:914.0px;top:1136.6px;font-size:20px;color:#111;letter-spacing:0.94px;">There's nothing to show right now. Just hover over a supported tweak to see its description.</div>
<div style="position:absolute;left:907.0px;top:1182.0px;width:253.0px;height:56.0px;background:#1e90ff;"></div>
<div class="t " style="left:933.0px;top:1199.4px;font-size:22px;color:#fff;transform:scaleX(0.9687);transform-origin:0 0;">Create Restore Point</div>
<div style="position:absolute;left:1194.0px;top:1182.0px;width:253.0px;height:56.0px;background:#1e90ff;"></div>
<div class="t " style="left:1231.8px;top:1199.4px;font-size:22px;color:#fff;transform:scaleX(0.9909);transform-origin:0 0;">Extended Info Bar</div>
<div style="position:absolute;left:1818.0px;top:1182.0px;width:142.0px;height:56.0px;background:#1e90ff;"></div>
<div class="t " style="left:1861.3px;top:1199.4px;font-size:22px;color:#fff;transform:scaleX(0.9547);transform-origin:0 0;">Close</div>
<div style="position:absolute;left:1982.0px;top:1182.0px;width:188.0px;height:56.0px;background:#1e90ff;"></div>
<div class="t " style="left:2009.9px;top:1199.4px;font-size:22px;color:#fff;transform:scaleX(0.9717);transform-origin:0 0;">Apply Tweaks</div>
<div style="position:absolute;left:0.0px;top:1350.0px;width:2560.0px;height:89.0px;background:#1c1c1c;"></div>
<div style="position:absolute;left:1616.5px;top:1356.5px;width:73.0px;height:73.0px;background:#2b2b2b;border-radius:6px;"></div>
<svg style="position:absolute;left:888.0px;top:1373.0px" width="44.0" height="44.0" viewBox="0 0 64 64" preserveAspectRatio="none"><defs><linearGradient id="wg_21" x1="0" y1="0" x2="1" y2="1"><stop offset="0" stop-color="#6ad8ff"/><stop offset="1" stop-color="#1a8ae0"/></linearGradient></defs>
<g fill="url(#wg_21)"><rect x="1" y="1" width="30" height="30" rx="2"/><rect x="33" y="1" width="30" height="30" rx="2"/><rect x="1" y="33" width="30" height="30" rx="2"/><rect x="33" y="33" width="30" height="30" rx="2"/></g></svg>
<svg style="position:absolute;left:971.0px;top:1372.0px" width="45.0" height="44.0" viewBox="0 0 64 64" preserveAspectRatio="none"><defs><linearGradient id="fdg_22" x1="0" y1="0" x2="1" y2="1"><stop offset="0" stop-color="#ffd75a"/><stop offset="1" stop-color="#f5b90f"/></linearGradient></defs><path d="M2 2 L24 2 L30 8 L62 8 L62 60 L2 60Z" fill="#e9a81a"/><path d="M2 12 L62 12 L62 60 L2 60Z" fill="url(#fdg_22)"/><path d="M14 42 Q14 38 18 38 L46 38 Q50 38 50 42 L50 60 L14 60Z" fill="#1877d2"/><path d="M20 48 L44 48" stroke="#3a8fe0" stroke-width="3"/></svg>
<svg style="position:absolute;left:1053.0px;top:1372.0px" width="46.0" height="45.0" viewBox="0 0 64 64" preserveAspectRatio="none"><path d="M32 5 C17 5 5 17 5 32 C5 38 7 43 10 47 L5 60 L18 56 C22 58 27 59 32 59 C47 59 59 47 59 32 C59 17 47 5 32 5Z" fill="none" stroke="#25d366" stroke-width="5"/>
<path d="M22 18 C20 20 18 24 20 30 C24 40 30 44 38 46 C42 47 44 46 46 42 L40 36 L36 40 C32 38 28 34 26 30 L30 26 L26 18Z" fill="#25d366"/></svg>
<svg style="position:absolute;left:1139.0px;top:1375.0px" width="38.0" height="38.0" viewBox="0 0 64 64" preserveAspectRatio="none"><rect x="0" y="0" width="64" height="64" rx="10" fill="#330000"/>
<text x="32" y="46.4" font-family="Liberation Sans" font-weight="bold" font-size="43" fill="#ff9a00" text-anchor="middle" textLength="42" lengthAdjust="spacingAndGlyphs">Ai</text></svg>
<svg style="position:absolute;left:1218.0px;top:1372.0px" width="45.0" height="45.0" viewBox="0 0 64 64" preserveAspectRatio="none"><circle cx="32" cy="32" r="30" fill="#2da94f"/>
<path d="M32 32 L6 17 A30 30 0 0 1 58 17 Z" fill="#ea4335"/>
<path d="M32 32 L58 17 A30 30 0 0 1 32 62 Z" fill="#fbbc04"/>
<circle cx="32" cy="32" r="13" fill="#fff"/><circle cx="32" cy="32" r="10" fill="#1a73e8"/></svg>
<svg style="position:absolute;left:1303.0px;top:1372.0px" width="39.0" height="46.0" viewBox="0 0 64 64" preserveAspectRatio="none"><path d="M32 2 L50 5 L58 12 L56 20 L60 26 L54 44 L32 62 L10 44 L4 26 L8 20 L6 12 L14 5 Z" fill="#f75a24"/>
<path d="M32 2 L50 5 L58 12 L56 20 L60 26 L54 44 L32 62 Z" fill="#ee4a1c"/>
<path d="M20 12 L32 10 L44 12 L52 20 L50 34 L42 46 L32 54 L22 46 L14 34 L12 20 Z" fill="#fff"/>
<path d="M20 24 L28 28 L26 34Z M44 24 L36 28 L38 34Z M26 44 L32 48 L38 44 L32 41Z M30 34 L32 40 L34 34Z" fill="#f75a24"/></svg>
<svg style="position:absolute;left:1383.0px;top:1371.0px" width="44.0" height="45.0" viewBox="0 0 64 64" preserveAspectRatio="none"><defs><linearGradient id="ffa_27" x1="0.8" y1="0" x2="0.3" y2="1"><stop offset="0" stop-color="#ffd43a"/><stop offset=".35" stop-color="#ff9a1c"/><stop offset=".65" stop-color="#ff4a3c"/><stop offset="1" stop-color="#e8157f"/></linearGradient></defs>
<circle cx="32" cy="37" r="26" fill="url(#ffa_27)"/>
<path d="M40 2 C48 10 62 18 60 38 C58 24 50 18 44 16 C46 10 42 6 40 2Z" fill="#ffce2e"/>
<path d="M6 30 C6 20 10 14 14 10 C14 16 18 20 22 20 C28 14 36 14 42 18 C36 18 32 20 30 24 Z" fill="#ff7a1a"/>
<circle cx="32" cy="34" r="13" fill="#7a3fe0"/><circle cx="30" cy="32" r="9" fill="#9152ea"/>
<path d="M10 26 C16 20 26 20 34 24 C28 24 22 26 20 32 C16 30 12 28 10 26Z" fill="#ffa21f"/></svg>
<svg style="position:absolute;left:1465.0px;top:1372.0px" width="45.0" height="45.0" viewBox="0 0 64 64" preserveAspectRatio="none"><circle cx="32" cy="32" r="29" fill="#3a3a3a" stroke="#b86ad6" stroke-width="3.5"/><path d="M24 16 L48 32 L24 48Z" fill="#f0f0f0"/></svg>
<svg style="position:absolute;left:1547.0px;top:1372.0px" width="47.0" height="45.0" viewBox="0 0 64 64" preserveAspectRatio="none"><defs><linearGradient id="eg2_29" x1="0" y1="0" x2="1" y2="1"><stop offset="0" stop-color="#1ba1e2"/><stop offset=".6" stop-color="#37b2c2"/><stop offset="1" stop-color="#5ad46a"/></linearGradient></defs>
<path d="M4 34 C4 14 18 2 34 2 C52 2 62 16 62 30 C62 40 54 44 46 44 C38 44 36 40 40 36 C42 32 40 24 30 24 C18 24 12 34 14 44 C10 40 4 36 4 34Z" fill="url(#eg2_29)"/>
<path d="M14 44 C12 30 22 22 32 24 C22 28 20 36 24 44 C30 56 48 58 58 48 C54 58 44 62 34 62 C22 62 16 54 14 44Z" fill="#0e63b8"/>
<path d="M4 34 C4 50 18 62 34 62 C20 60 12 50 14 40 C10 38 6 36 4 34Z" fill="#1b76d0"/></svg>
<svg style="position:absolute;left:1629.0px;top:1371.0px" width="47.0" height="46.0" viewBox="0 0 64 64" preserveAspectRatio="none"><polygon points="0,0 64,0 32,32" fill="#00d6f2"/><polygon points="0,0 32,32 0,64" fill="#00bdf6"/><polygon points="64,0 64,64 32,32" fill="#009fe6"/><polygon points="0,64 64,64 32,32" fill="#0050db"/><path d="M0 0 L64 64 M64 0 L0 64" stroke="#b9c7cf" stroke-width="1"/></svg>
<div style="position:absolute;left:986.7px;top:1424.0px;width:12.0px;height:5.0px;background:#9a9a9a;border-radius:3px;"></div>
<div style="position:absolute;left:1069.6px;top:1424.0px;width:12.0px;height:5.0px;background:#9a9a9a;border-radius:3px;"></div>
<div style="position:absolute;left:1152.0px;top:1424.0px;width:12.0px;height:5.0px;background:#9a9a9a;border-radius:3px;"></div>
<div style="position:absolute;left:1234.6px;top:1424.0px;width:12.0px;height:5.0px;background:#9a9a9a;border-radius:3px;"></div>
<div style="position:absolute;left:1317.0px;top:1424.0px;width:12.0px;height:5.0px;background:#9a9a9a;border-radius:3px;"></div>
<div style="position:absolute;left:1399.4px;top:1424.0px;width:12.0px;height:5.0px;background:#9a9a9a;border-radius:3px;"></div>
<div style="position:absolute;left:1482.0px;top:1424.0px;width:12.0px;height:5.0px;background:#9a9a9a;border-radius:3px;"></div>
<div style="position:absolute;left:1564.5px;top:1424.0px;width:12.0px;height:5.0px;background:#9a9a9a;border-radius:3px;"></div>
<div style="position:absolute;left:1638.5px;top:1424.5px;width:29.5px;height:4.0px;background:#e8745c;border-radius:2px;"></div>
<svg style="position:absolute;left:1996px;top:1385px" width="26" height="16" viewBox="0 0 26 16"><path d="M2.5 13.5 L13 3 L23.5 13.5" stroke="#fff" stroke-width="2.2" fill="none"/></svg>
<svg style="position:absolute;left:2053.0px;top:1378.0px" width="32.0" height="29.0" viewBox="0 0 64 64" preserveAspectRatio="none"><defs><radialGradient id="idg_31" cx=".35" cy=".3" r=".8"><stop offset="0" stop-color="#f5f08a"/><stop offset=".35" stop-color="#7fbf3a"/><stop offset=".7" stop-color="#3a7ed6"/><stop offset="1" stop-color="#1c3c8a"/></radialGradient></defs>
<ellipse cx="24" cy="44" rx="21" ry="15" fill="none" stroke="#3b6fd8" stroke-width="10"/>
<path d="M5 40 C8 30 18 26 28 28" stroke="#ff5a2a" stroke-width="5" fill="none"/><path d="M6 46 C10 36 18 33 28 34" stroke="#ffd21f" stroke-width="4" fill="none"/><path d="M8 52 C12 44 20 40 28 40" stroke="#4cc04a" stroke-width="4" fill="none"/>
<circle cx="40" cy="24" r="20" fill="url(#idg_31)"/>
<path d="M26 40 L62 34 L46 48 L40 62 Z" fill="#22a822"/><path d="M26 40 L62 34 L40 46Z" fill="#4ad04a"/></svg>
<svg style="position:absolute;left:2115px;top:1380px" width="28" height="28" viewBox="0 0 28 28"><rect x="1" y="1" width="26" height="26" fill="#5a5650" stroke="#e8dcc0" stroke-width="2"/><rect x="5" y="4" width="4" height="12" fill="#e8462a"/><rect x="9" y="4" width="4" height="12" fill="#f5c40f"/><rect x="13" y="4" width="4" height="12" fill="#54b948"/><rect x="17" y="4" width="5" height="12" fill="#2196f3"/><rect x="5" y="20" width="4" height="3" fill="#ddd"/><rect x="11" y="20" width="4" height="3" fill="#ddd"/><rect x="17" y="20" width="4" height="3" fill="#ddd"/></svg>
<div class="t " style="left:2178.0px;top:1386.1px;font-size:20px;color:#fff;transform:scaleX(0.9921);transform-origin:0 0;">ENG</div>
<svg style="position:absolute;left:2255px;top:1381px" width="34" height="26" viewBox="0 0 34 26"><g fill="none" stroke="#fff" stroke-width="2"><path d="M2 9 C11 1 23 1 32 9"/><path d="M7 14 C13 9 21 9 27 14"/><path d="M12 19 C15 16.5 19 16.5 22 19"/></g><circle cx="17" cy="23" r="2.3" fill="#fff"/></svg>
<svg style="position:absolute;left:2300px;top:1380px" width="34" height="28" viewBox="0 0 34 28"><path d="M2 9 L8 9 L16 2 L16 26 L8 19 L2 19 Z" fill="none" stroke="#fff" stroke-width="2"/><path d="M20 10 C22 12 22 16 20 18" stroke="#fff" stroke-width="2" fill="none"/><path d="M24 7 C27 11 27 17 24 21" stroke="#fff" stroke-width="2" fill="none"/><path d="M28 3 C32 9 32 19 28 25" stroke="#777" stroke-width="1.5" fill="none"/></svg>
<svg style="position:absolute;left:2344px;top:1378px" width="36" height="28" viewBox="0 0 36 28"><rect x="2" y="9" width="26" height="15" rx="2" fill="none" stroke="#fff" stroke-width="2"/><rect x="28" y="13" width="4" height="7" fill="#fff"/><rect x="5" y="12" width="19" height="9" fill="#fff"/><path d="M9 0 L5 10 L10 10 L7 19" stroke="#fff" stroke-width="2" fill="none"/></svg>
<div class="t " style="left:2470.0px;top:1369.4px;font-size:19px;color:#fff;transform:scaleX(1.1361);transform-origin:0 0;">06.42</div>
<div class="t " style="left:2409.0px;top:1399.9px;font-size:19px;color:#fff;transform:scaleX(1.2386);transform-origin:0 0;">29/11/2025</div>
<svg style="position:absolute;left:2100px;top:1290px" width="430" height="110" viewBox="2100 1290 430 110"><g fill="#fff"><polygon points="2139.4,1299.8 2196.1,1299.8 2196.1,1362.2 2178.7,1362.2 2152,1332.7 2171.2,1313.4 2152.5,1313.4 2139.4,1324.7"/><polygon points="2111.2,1320.5 2126.2,1320.5 2126.2,1369.7 2138.9,1369.7 2138.9,1341.6 2141.2,1341.4 2169.8,1374.4 2169.8,1384.7 2111.2,1384.7"/></g><g fill="none" stroke="#fff" stroke-width="8.8"><path d="M2209.5 1308.3 L2209.5 1376.7"/><circle cx="2279.5" cy="1353.8" r="18.7"/><path d="M2298 1332 L2298 1376.7"/><path d="M2350.4 1345.9 A18.7 18.7 0 1 0 2350.4 1361.7"/><circle cx="2386.3" cy="1353.8" r="18.5"/><path d="M2422.2 1376.7 L2422.2 1350 A15.5 15.5 0 0 1 2453.8 1350 L2453.8 1376.7"/><path d="M2473.3 1308.3 L2473.3 1376.7"/></g><g fill="#fff"><polygon points="2213,1338.7 2244.8,1308.3 2253.7,1308.3 2231,1337.5 2253.7,1376.7 2243,1376.7 2224.7,1345.6 2213,1359.4"/><polygon points="2477,1361 2497.6,1330.8 2508.5,1330.8 2489,1355 2507,1376.7 2496.5,1376.7 2483,1362 2477,1373"/></g></svg>
</body></html>
